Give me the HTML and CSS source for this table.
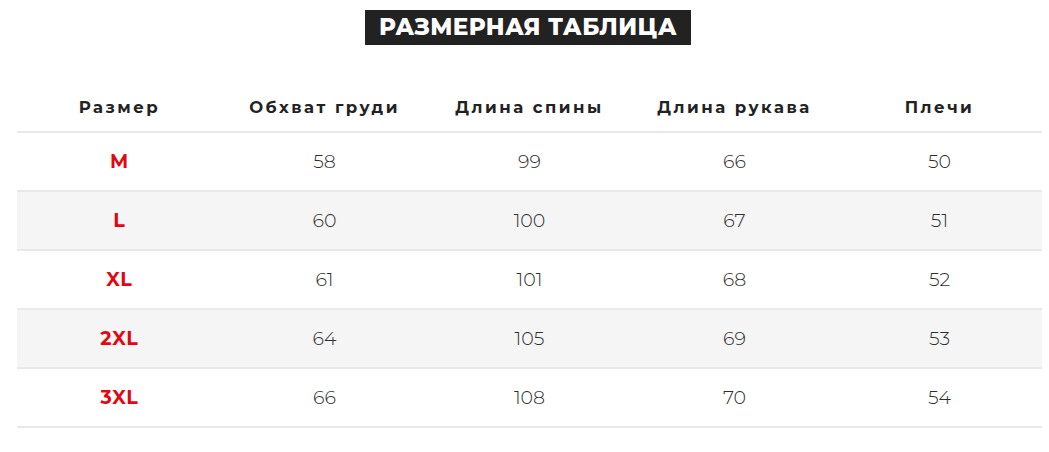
FILE: index.html
```html
<!DOCTYPE html>
<html lang="ru">
<head>
<meta charset="utf-8">
<link rel="stylesheet" href="styles.css">
</head>
<body>
<div class="page">
  <div class="title-wrap"><h1 class="title">РАЗМЕРНАЯ ТАБЛИЦА</h1></div>
  <table class="sizes">
    <thead>
      <tr><th>Размер</th><th>Обхват груди</th><th>Длина спины</th><th>Длина рукава</th><th>Плечи</th></tr>
    </thead>
    <tbody>
      <tr><td class="sz">M</td><td>58</td><td>99</td><td>66</td><td>50</td></tr>
      <tr class="alt"><td class="sz">L</td><td>60</td><td>100</td><td>67</td><td>51</td></tr>
      <tr><td class="sz">XL</td><td>61</td><td>101</td><td>68</td><td>52</td></tr>
      <tr class="alt"><td class="sz">2XL</td><td>64</td><td>105</td><td>69</td><td>53</td></tr>
      <tr><td class="sz">3XL</td><td>66</td><td>108</td><td>70</td><td>54</td></tr>
    </tbody>
  </table>
</div>
</body>
</html>
```
FILE: styles.css
```css
html, body { margin: 0; padding: 0; background: #fff; }
body { font-family: "Montserrat", "Inter", "DejaVu Sans", sans-serif; color: #333; }
.page { padding: 10px 7px 0 17px; }
.title-wrap { display: flex; justify-content: center; padding-right: 3px; }
.title {
  margin: 0;
  background: #222;
  color: #fff;
  font-size: 23px;
  font-weight: 800;
  letter-spacing: 0.45px;
  height: 35px;
  line-height: 35px;
  padding: 0 14px;
}
.sizes {
  margin-top: 35px;
  width: 1025px;
  border-collapse: collapse;
  table-layout: fixed;
}
.sizes th {
  height: 49px;
  padding: 2px 0 0;
  font-size: 16.5px;
  font-weight: 700;
  letter-spacing: 2.5px;
  color: #222;
  border-bottom: 2px solid #e9e9e9;
  text-align: center;
}
.sizes td {
  height: 57px;
  padding: 0;
  text-align: center;
  font-size: 19px;
  font-weight: 300;
  color: #2e2e2e;
  border-bottom: 2px solid #e9e9e9;
}
.sizes tr.alt td { background: #f5f5f5; }
.sizes td.sz { color: #e30613; font-weight: 700; font-size: 19px; letter-spacing: 0.8px; }
```
